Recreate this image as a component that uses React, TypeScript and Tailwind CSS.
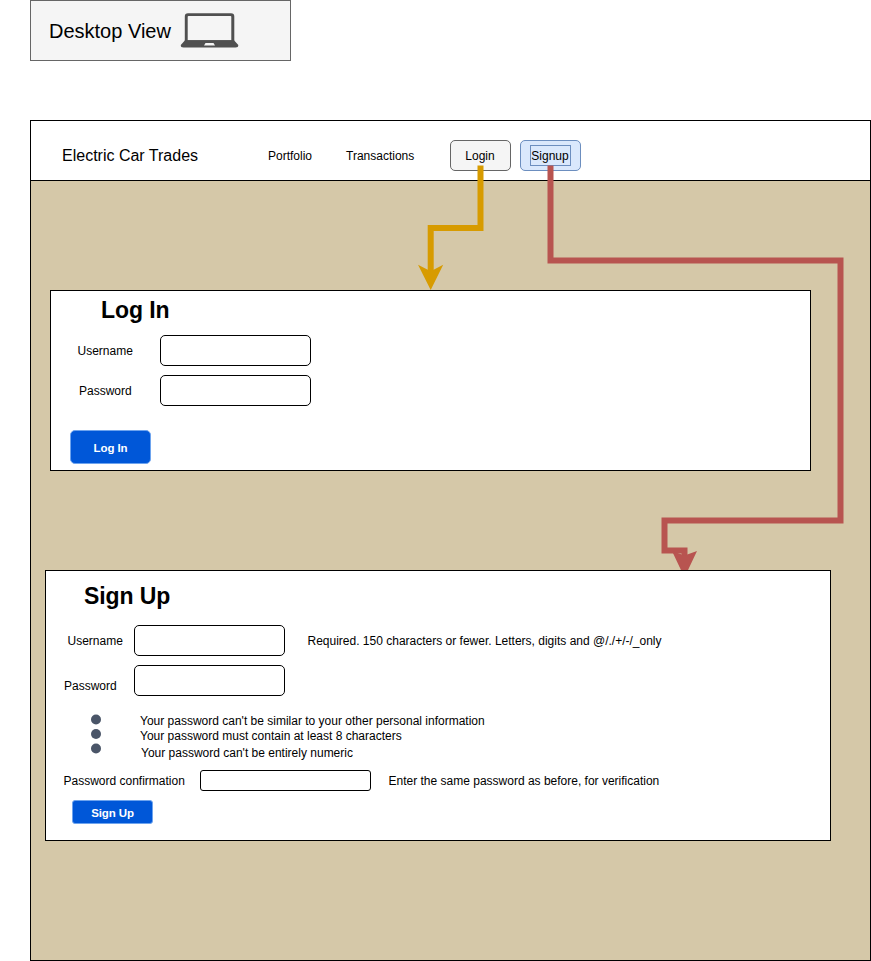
import type { ReactNode } from "react";

function Field({ className = "h-[31px] w-[151px] rounded-[5px]" }: { className?: string }) {
  return <input className={`block shrink-0 border border-black bg-white ${className}`} />;
}

function Label({ className, children }: { className: string; children: ReactNode }) {
  return <span className={`shrink-0 whitespace-nowrap pt-[2px] ${className}`}>{children}</span>;
}

function LaptopIcon() {
  return (
    <svg className="ml-[9px] mt-[12px] shrink-0" width="59" height="36" viewBox="0 0 59 36">
      <path
        fill="#505050"
        fillRule="evenodd"
        d="M8 .3H51Q54.300.3 54.300 3.500V28H4.800V3.500Q4.800.3 8 .3ZM8.500 3Q7.700 3 7.700 3.800V27.300H51.300V3.800Q51.300 3 50.500 3Z"
      />
      <path
        fill="#505050"
        fillRule="evenodd"
        d="M5 27.300H54L58.300 32Q58.500 34.500 55.500 34.500H3.500Q.5 34.500.8 32ZM25.500 30L24 32.500H35L33.500 30Z"
      />
    </svg>
  );
}

function Connectors() {
  return (
    <svg className="pointer-events-none absolute left-0 top-0" width="871" height="570" viewBox="0 0 871 570">
      <path d="M480.500 165.500V228H430.700V275" fill="none" stroke="#d79b00" strokeWidth="6" />
      <path d="M430.700 290L418 264.800L430.700 271.200L443.200 264.800Z" fill="#d79b00" />
      <path d="M550.500 165.500V260.500H840.500V520.500H664.500V550.500H684.500V560" fill="none" stroke="#b85450" strokeWidth="6" />
      <path d="M684.500 577.500L672 551L684.500 555.500L697 551Z" fill="#b85450" />
    </svg>
  );
}

export default function App() {
  return (
    <div className="relative h-[961px] w-[871px] overflow-hidden bg-white font-['Liberation_Sans',Arial,sans-serif] text-[12px] leading-[15px] text-black">
      <header className="ml-[30px] flex h-[61px] w-[261px] border border-[#666666] bg-[#f5f5f5]">
        <span className="ml-[18px] w-[122px] whitespace-nowrap text-[20px] leading-[60px]">Desktop View</span>
        <LaptopIcon />
      </header>

      <main className="ml-[30px] mt-[59px] h-[841px] w-[841px] border border-black bg-[#d5c8a8]">
        <nav className="flex h-[60px] items-start border-b border-black bg-white pt-[19px]">
          <span className="ml-[31px] w-[206px] text-[16px] leading-[31px]">Electric Car Trades</span>
          <span className="w-[78px] leading-[33px]">Portfolio</span>
          <span className="w-[104px] leading-[33px]">Transactions</span>
          <button className="h-[31px] w-[61px] rounded-[5px] border border-[#666666] bg-[#f5f5f5] pr-px pt-[2px]">Login</button>
          <button className="ml-[9px] flex h-[31px] w-[61px] items-center justify-center rounded-[5px] border border-[#6c8ebf] bg-[#dae8fc]">
            <span className="flex h-[21px] w-[41px] items-center justify-center border border-[#6c8ebf] pr-px pt-[2px]">Signup</span>
          </button>
        </nav>

        <section className="ml-[19px] mt-[109px] h-[181px] w-[761px] border border-black bg-white">
          <h1 className="h-[44px] pl-[50px] text-[23px] font-bold leading-[39px] tracking-[-0.1px]">Log In</h1>
          <div className="flex items-center">
            <Label className="ml-[26.500px] w-[82.500px]">Username</Label>
            <Field />
          </div>
          <div className="mt-[9px] flex items-center">
            <Label className="ml-[28px] w-[81px]">Password</Label>
            <Field />
          </div>
          <button className="ml-[19px] mt-[24px] block h-[34px] w-[81px] rounded-[5px] border border-[#6ea4ee] bg-[#0057d8] pt-[2px] text-[11.500px] font-bold tracking-[-0.1px] text-white">
            Log In
          </button>
        </section>

        <section className="ml-[14px] mt-[99px] h-[271px] w-[786px] border border-black bg-white">
          <h1 className="h-[54px] pl-[38px] text-[23px] font-bold leading-[51px] tracking-[-0.1px]">Sign Up</h1>
          <div className="flex items-center">
            <Label className="ml-[21.500px] w-[66.500px]">Username</Label>
            <Field />
            <Label className="ml-[22.500px]">Required. 150 characters or fewer. Letters, digits and @/./+/-/_only</Label>
          </div>
          <div className="mt-[9px] flex items-start">
            <Label className="ml-[18px] mt-[12px] w-[70px]">Password</Label>
            <Field />
          </div>
          <div className="mt-[17px] flex h-[57px] items-start">
            <svg className="ml-[44px] mt-px shrink-0" width="12" height="41" viewBox="0 0 12 41" fill="#4a5568">
              <circle cx="6" cy="5.500" r="5" />
              <circle cx="6" cy="20" r="5" />
              <circle cx="6" cy="34.500" r="5" />
            </svg>
            <ul className="ml-[38px] mt-px whitespace-nowrap">
              <li>Your password can't be similar to your other personal information</li>
              <li>Your password must contain at least 8 characters</li>
              <li className="ml-px mt-[2px]">Your password can't be entirely numeric</li>
            </ul>
          </div>
          <div className="flex items-center">
            <Label className="ml-[17.500px] w-[136.500px]">Password confirmation</Label>
            <Field className="h-[21px] w-[171px] rounded-[3px]" />
            <Label className="ml-[17.500px]">Enter the same password as before, for verification</Label>
          </div>
          <button className="ml-[26px] mt-[9px] block h-[24px] w-[81px] rounded-[3px] border border-[#6ea4ee] bg-[#0057d8] pt-[2px] text-[11.500px] font-bold tracking-[-0.1px] text-white">
            Sign Up
          </button>
        </section>
      </main>
      <Connectors />
    </div>
  );
}
